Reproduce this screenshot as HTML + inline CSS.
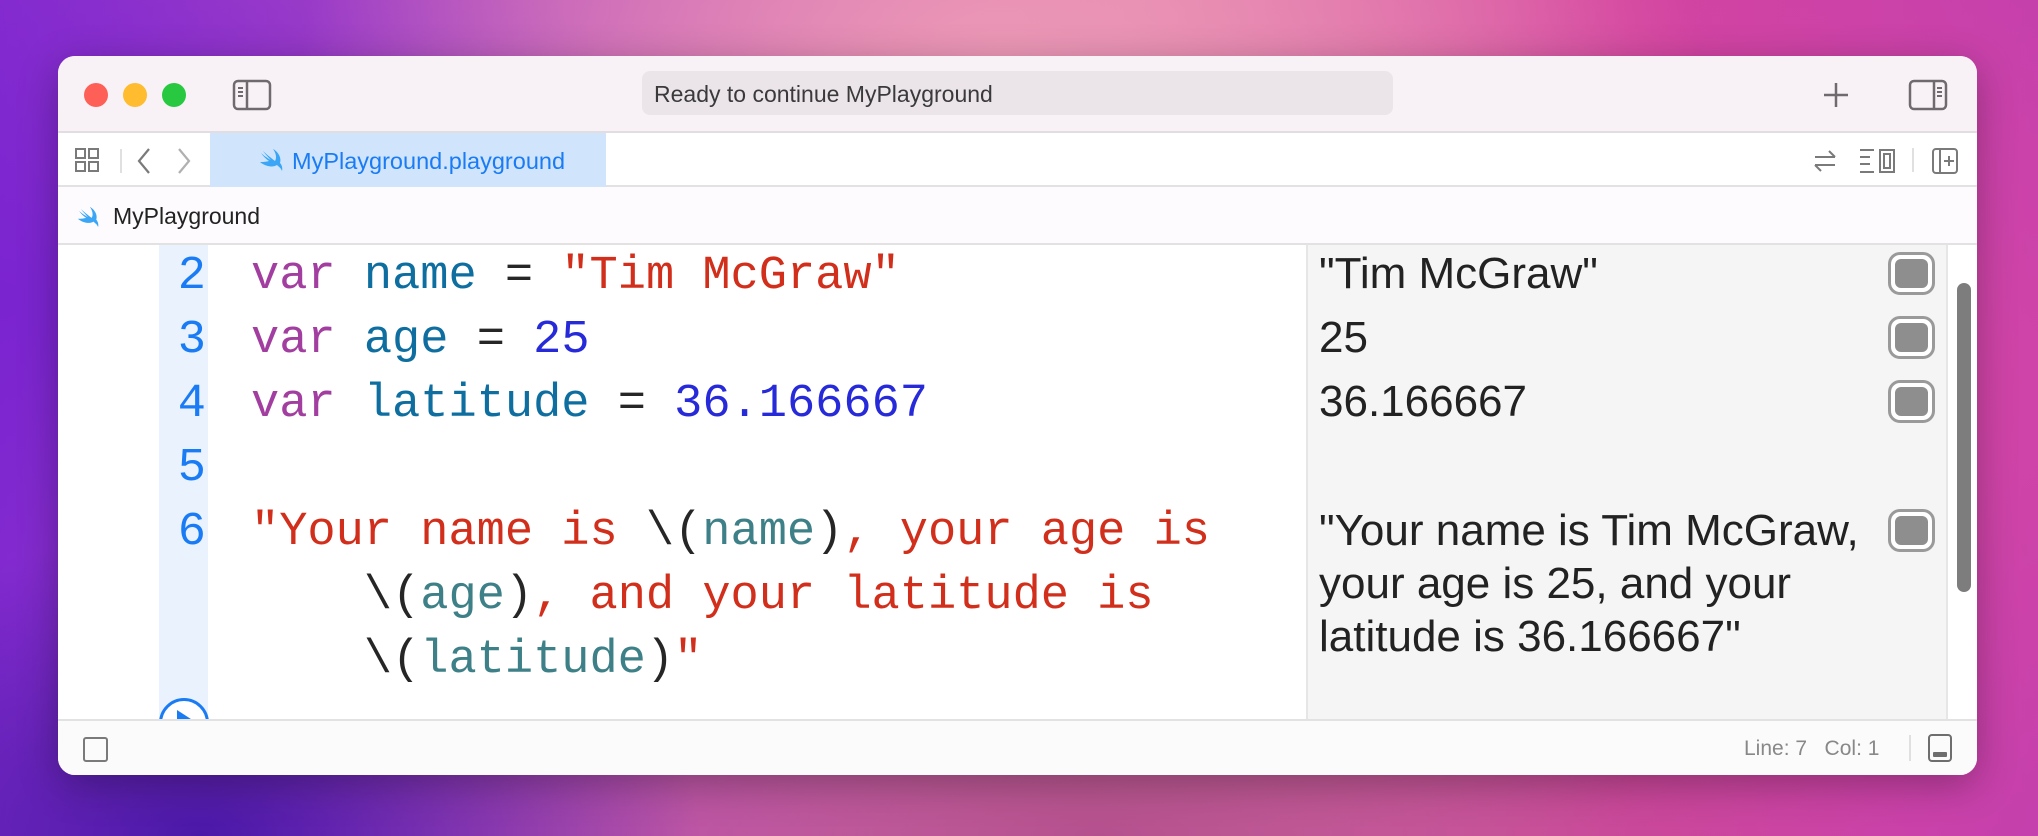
<!DOCTYPE html>
<html><head><meta charset="utf-8"><style>
*{margin:0;padding:0;box-sizing:border-box}
body{width:2038px;height:836px;overflow:hidden;position:relative;font-family:"Liberation Sans",sans-serif;
background:
radial-gradient(ellipse 700px 400px at 1000px 60px,#ec98b6 0%,rgba(236,152,182,0) 100%),
radial-gradient(ellipse 600px 500px at 1900px 400px,#d245a6 0%,rgba(210,69,166,0) 100%),
radial-gradient(ellipse 500px 300px at 200px 836px,#4a18a8 0%,rgba(74,24,168,0) 100%),
radial-gradient(ellipse 700px 500px at 0px 300px,#7a24d0 0%,rgba(122,36,208,0) 100%),
radial-gradient(ellipse 800px 300px at 1100px 836px,#b5508e 0%,rgba(181,80,142,0) 100%),
linear-gradient(90deg,#8a2fcf 0%,#c65cb8 35%,#e27fae 55%,#d4449f 80%,#c33fae 100%);}
.win{position:absolute;left:58px;top:56px;width:1919px;height:719px;border-radius:17px;background:#fff;overflow:hidden;box-shadow:0 10px 40px rgba(0,0,0,.3)}
.abs{position:absolute}
.title{left:0;top:0;width:100%;height:77px;background:#f8f2f7;border-bottom:2px solid #e2dde1}
.tl{top:27px;width:24px;height:24px;border-radius:50%}
.tabbar{left:0;top:77px;width:100%;height:54px;background:#fff;border-bottom:2px solid #e2e2e2}
.crumb{left:0;top:131px;width:100%;height:58px;background:#fdfbfd;border-bottom:2px solid #e2e2e2}
.code{font-family:"Liberation Mono",monospace;font-size:47px;white-space:pre;line-height:64px}
.k{color:#a23ea0}.n{color:#0f6ea0}.s{color:#d12f1b}.d{color:#272ad8}.i{color:#3e8087}.p{color:#262626}
.res{font-size:44px;color:#222;line-height:53px;white-space:pre}
.rb{left:1830px;width:47px;height:43px;border:3px solid #9a9a9a;border-radius:12px;background:#fff}
.rb::after{content:"";position:absolute;left:4px;top:4px;right:4px;bottom:4px;background:#8e8e8e;border-radius:6px}
</style></head><body>
<div class="win">
 <div class="abs title">
  <div class="abs tl" style="left:26px;background:#fe5f57;"></div>
  <div class="abs tl" style="left:65px;background:#febc2e;"></div>
  <div class="abs tl" style="left:104px;background:#28c840;"></div>
  <svg class="abs" style="left:174px;top:23px" width="40" height="32" viewBox="0 0 40 32"><rect x="2" y="2" width="36" height="28" rx="4" fill="none" stroke="#6e6a6e" stroke-width="2.5"/><line x1="15" y1="2" x2="15" y2="30" stroke="#6e6a6e" stroke-width="2.5"/><path d="M6 9h5M6 13h5M6 17h5" stroke="#6e6a6e" stroke-width="2"/></svg>
  <div class="abs" style="left:584px;top:15px;width:751px;height:44px;border-radius:8px;background:#ebe5ea;font-size:23px;color:#3a3a3a;line-height:46px;padding-left:12px">Ready to continue MyPlayground</div>
  <svg class="abs" style="left:1765px;top:26px" width="26" height="26"><path d="M13 1v24M1 13h24" stroke="#6e6a6e" stroke-width="2.5"/></svg>
  <svg class="abs" style="left:1850px;top:23px" width="40" height="32" viewBox="0 0 40 32"><rect x="2" y="2" width="36" height="28" rx="4" fill="none" stroke="#6e6a6e" stroke-width="2.5"/><line x1="26" y1="2" x2="26" y2="30" stroke="#6e6a6e" stroke-width="2.5"/><path d="M29 9h5M29 13h5M29 17h5" stroke="#6e6a6e" stroke-width="2"/></svg>
 </div>
 <div class="abs tabbar">
  <svg class="abs" style="left:17px;top:15px" width="26" height="26" viewBox="0 0 26 26" fill="none" stroke="#7a7a7a" stroke-width="2"><rect x="1" y="1" width="9" height="9"/><rect x="14" y="1" width="9" height="9"/><rect x="1" y="14" width="9" height="9"/><rect x="14" y="14" width="9" height="9"/></svg>
  <div class="abs" style="left:62px;top:16px;width:2px;height:24px;background:#e0e0e0"></div>
  <svg class="abs" style="left:78px;top:14px" width="16" height="28"><path d="M13 2L3 14l10 12" fill="none" stroke="#7a7a7a" stroke-width="2.2"/></svg>
  <svg class="abs" style="left:118px;top:14px" width="16" height="28"><path d="M3 2l10 12L3 26" fill="none" stroke="#b0b0b0" stroke-width="2.2"/></svg>
  <div class="abs" style="left:152px;top:0;width:396px;height:54px;background:#d0e4fb"></div>
  <svg class="abs" style="left:200px;top:15px" width="26" height="24" viewBox="0 0 26 24"><path d="M2 14c5 4 12 6 17 3 2 2 4 3 5 6 1-4-1-7-2-8 2-6-3-12-7-14 3 4 4 9 2 12-4-3-9-7-12-10 3 4 6 7 8 9-4-2-8-5-10-7 2 3 5 6 8 8-4 1-6 1-9 1z" fill="#3aa6f5"/></svg>
  <div class="abs" style="left:234px;top:0;line-height:56px;font-size:23.5px;color:#1a7cf5">MyPlayground.playground</div>
  <svg class="abs" style="left:1754px;top:15px" width="26" height="26" viewBox="0 0 26 26" fill="none" stroke="#7a7a7a" stroke-width="2"><path d="M3 9h20M17 3l6 6M23 17H3M9 23l-6-6"/></svg>
  <svg class="abs" style="left:1801px;top:15px" width="38" height="26" viewBox="0 0 38 26" fill="none" stroke="#7a7a7a" stroke-width="2"><path d="M1 2h14M1 9h10M1 16h10M1 24h14"/><rect x="21" y="2" width="14" height="22"/><rect x="25" y="6" width="6" height="14"/></svg>
  <div class="abs" style="left:1854px;top:15px;width:2px;height:24px;background:#e0e0e0"></div>
  <svg class="abs" style="left:1873px;top:14px" width="28" height="28" viewBox="0 0 28 28" fill="none" stroke="#7a7a7a" stroke-width="2"><rect x="2" y="2" width="24" height="24" rx="3"/><path d="M9 2v24M18 9v10M13 14h10"/></svg>
 </div>
 <div class="abs crumb">
  <svg class="abs" style="left:18px;top:19px" width="24" height="22" viewBox="0 0 26 24"><path d="M2 14c5 4 12 6 17 3 2 2 4 3 5 6 1-4-1-7-2-8 2-6-3-12-7-14 3 4 4 9 2 12-4-3-9-7-12-10 3 4 6 7 8 9-4-2-8-5-10-7 2 3 5 6 8 8-4 1-6 1-9 1z" fill="#3aa6f5"/></svg>
  <div class="abs" style="left:55px;top:0;line-height:58px;font-size:23px;color:#222">MyPlayground</div>
 </div>
 <div class="abs" style="left:0;top:189px;width:1248px;height:474px;background:#fff"></div>
 <div class="abs" style="left:101px;top:189px;width:49px;height:474px;background:#eaf2fe"></div>
 <div class="abs" style="left:1248px;top:189px;width:642px;height:474px;background:#f5f5f5;border-left:2px solid #e6e6e6;border-right:2px solid #e6e6e6"></div>
 <div class="abs" style="left:1899px;top:227px;width:14px;height:309px;border-radius:7px;background:#7d7d7d"></div>
 <div class="abs code" style="left:0;top:189px;width:148px;text-align:right;color:#1a7cf5">2
3
4
5
6</div>
 <div class="abs code" style="left:193px;top:189px"><span class="k">var</span> <span class="n">name</span> <span class="p">=</span> <span class="s">"Tim McGraw"</span>
<span class="k">var</span> <span class="n">age</span> <span class="p">=</span> <span class="d">25</span>
<span class="k">var</span> <span class="n">latitude</span> <span class="p">=</span> <span class="d">36.166667</span>

<span class="s">"Your name is </span><span class="p">\(</span><span class="i">name</span><span class="p">)</span><span class="s">, your age is</span>
    <span class="p">\(</span><span class="i">age</span><span class="p">)</span><span class="s">, and your latitude is</span>
    <span class="p">\(</span><span class="i">latitude</span><span class="p">)</span><span class="s">"</span></div>
 <div class="abs" style="left:101px;top:642px;width:50px;height:50px;border:3px solid #1a7cf5;border-radius:50%;background:#fff"></div>
 <svg class="abs" style="left:116px;top:652px" width="24" height="14"><path d="M3 2L20 13H3z" fill="#1a7cf5"/></svg>
 <div class="abs res" style="left:1261px;top:191px">"Tim McGraw"</div>
 <div class="abs res" style="left:1261px;top:255px">25</div>
 <div class="abs res" style="left:1261px;top:319px">36.166667</div>
 <div class="abs res" style="left:1261px;top:448px">"Your name is Tim McGraw,
your age is 25, and your
latitude is 36.166667"</div>
 <div class="abs rb" style="top:196px"></div>
 <div class="abs rb" style="top:260px"></div>
 <div class="abs rb" style="top:324px"></div>
 <div class="abs rb" style="top:453px"></div>
 <div class="abs" style="left:0;top:663px;width:100%;height:56px;background:#fbfbfb;border-top:2px solid #e2e2e2">
  <div class="abs" style="left:25px;top:16px;width:25px;height:25px;border:2px solid #7a7a7a;border-radius:3px"></div>
  <div class="abs" style="left:1686px;top:0;line-height:56px;font-size:21px;color:#888;white-space:pre">Line: 7   Col: 1</div>
  <div class="abs" style="left:1851px;top:14px;width:2px;height:26px;background:#e0e0e0"></div>
  <div class="abs" style="left:1870px;top:13px;width:24px;height:28px;border:2px solid #6e6e6e;border-radius:4px"><div class="abs" style="left:3px;bottom:3px;width:14px;height:5px;background:#6e6e6e;border-radius:1px"></div></div>
 </div>
</div>
</body></html>
